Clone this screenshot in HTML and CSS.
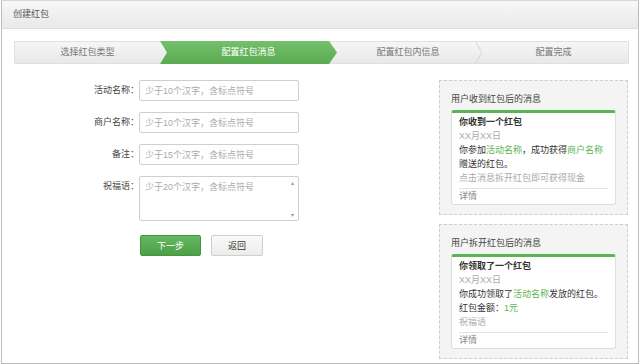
FILE: index.html
```html
<!DOCTYPE html>
<html lang="zh-CN">
<head>
  <meta charset="UTF-8">
  <title>创建红包</title>
  <link rel="stylesheet" href="styles.css">
</head>
<body>
  <div class="frame">
    <div class="header">创建红包</div>

    <div class="steps">
      <div class="step step-1">选择红包类型</div>
      <div class="step step-2 active">配置红包消息</div>
      <div class="step step-3">配置红包内信息
        <svg class="chevron" width="8" height="23" viewBox="0 0 8 23"><polyline points="0,0 7,11.5 0,23" fill="none" stroke="#d6d6d6" stroke-width="1"/></svg>
      </div>
      <div class="step step-4">配置完成</div>
    </div>

    <div class="main">
      <div class="form">
        <div class="row">
          <label class="label">活动名称：</label>
          <input class="field" type="text" placeholder="少于10个汉字，含标点符号">
        </div>
        <div class="row">
          <label class="label">商户名称：</label>
          <input class="field" type="text" placeholder="少于10个汉字，含标点符号">
        </div>
        <div class="row">
          <label class="label">备注：</label>
          <input class="field" type="text" placeholder="少于15个汉字，含标点符号">
        </div>
        <div class="row">
          <label class="label">祝福语：</label>
          <div class="area">
            <div class="area-text">少于20个汉字，含标点符号</div>
            <div class="area-bar">
              <span>&#9652;</span>
              <span>&#9662;</span>
            </div>
          </div>
        </div>
        <div class="actions">
          <button class="btn btn-green">下一步</button>
          <button class="btn btn-plain">返回</button>
        </div>
      </div>

      <div class="preview">
        <div class="panel">
          <div class="panel-title">用户收到红包后的消息</div>
          <div class="card">
            <div class="card-title">你收到一个红包</div>
            <div class="muted">XX月XX日</div>
            <div>你参加<span class="hl">活动名称</span>，成功获得<span class="hl">商户名称</span></div>
            <div>赠送的红包。</div>
            <div class="muted">点击消息拆开红包即可获得现金</div>
            <div class="card-foot">详情</div>
          </div>
        </div>
        <div class="panel">
          <div class="panel-title">用户拆开红包后的消息</div>
          <div class="card">
            <div class="card-title">你领取了一个红包</div>
            <div class="muted">XX月XX日</div>
            <div>你成功领取了<span class="hl">活动名称</span>发放的红包。</div>
            <div>红包金额：<span class="hl">1元</span></div>
            <div class="muted">祝福语</div>
            <div class="card-foot">详情</div>
          </div>
        </div>
      </div>
    </div>
  </div>
</body>
</html>
```

FILE: styles.css
```css
* {
  box-sizing: border-box;
}

body {
  margin: 0;
  font-family: "Liberation Sans", "Noto Sans CJK SC", sans-serif;
  font-size: 9px;
  color: #333;
  background: #fff;
}

.frame {
  width: 638px;
  height: 364px;
  margin-left: 1px;
  border: 1px solid #bdbdbd;
  border-top-color: #d8d8d8;
}

.header {
  height: 28px;
  line-height: 27px;
  padding-left: 11px;
  color: #555;
  background: linear-gradient(#f7f7f7, #e9e9e9);
  border-bottom: 1px solid #dcdcdc;
}

.steps {
  display: flex;
  height: 23px;
  margin: 12px 9px 0 12px;
  background: linear-gradient(#f6f6f6, #e8e8e8);
  border: 1px solid #e0e0e0;
}

.step {
  position: relative;
  line-height: 21px;
  text-align: center;
  color: #777;
}

.step-1 { width: 145px; }
.step-2 { width: 177px; margin-right: -8px; }
.step-3 { width: 150px; padding-left: 8px; }
.step-4 { flex: 1; }

.step.active {
  z-index: 1;
  margin-top: -1px;
  height: 23px;
  line-height: 23px;
  color: #fff;
  background: linear-gradient(#74c06c, #5aaa52);
  clip-path: polygon(0 0, calc(100% - 8px) 0, 100% 50%, calc(100% - 8px) 100%, 0 100%, 7px 50%);
}

.chevron {
  position: absolute;
  top: -1px;
  right: -4px;
}

.main {
  display: flex;
  padding: 16px 10px 0 12px;
}

.form {
  flex: 1;
}

.row {
  display: flex;
  align-items: flex-start;
  margin-bottom: 11px;
}

.label {
  width: 125px;
  line-height: 21px;
  text-align: right;
  color: #444;
}

.field {
  width: 160px;
  height: 21px;
  padding: 0 5px;
  border: 1px solid #cfcfcf;
  border-radius: 2px;
  font: inherit;
  outline: none;
}

.field::placeholder {
  color: #aaa;
}

.area {
  display: flex;
  width: 160px;
  height: 45px;
  border: 1px solid #cfcfcf;
  border-radius: 2px;
}

.area-text {
  flex: 1;
  padding: 3px 5px;
  color: #aaa;
}

.area-bar {
  display: flex;
  flex-direction: column;
  justify-content: space-between;
  width: 11px;
  padding: 2px 0;
  font-size: 6px;
  color: #999;
  text-align: center;
}

.actions {
  display: flex;
  gap: 10px;
  padding-left: 126px;
  margin-top: 14px;
}

.btn {
  height: 21px;
  border-radius: 2px;
  font: inherit;
  cursor: pointer;
}

.btn-green {
  width: 61px;
  color: #fff;
  background: linear-gradient(#66b860, #4d9f47);
  border: 1px solid #45963f;
}

.btn-plain {
  width: 52px;
  color: #333;
  background: linear-gradient(#fafafa, #ececec);
  border: 1px solid #cfcfcf;
}

.preview {
  width: 189px;
  display: flex;
  flex-direction: column;
  gap: 9px;
}

.panel {
  padding: 10px 11px 9px;
  background: #f4f4f4;
  border: 1px dashed #cdcdcd;
}

.panel-title {
  line-height: 16px;
  margin-bottom: 3px;
  color: #444;
}

.card {
  padding: 2px 7px 1px;
  line-height: 14px;
  background: #fff;
  border: 1px solid #dedede;
  border-top: 3px solid #5cb552;
  border-radius: 3px;
}

.card-title {
  font-weight: bold;
  color: #333;
}

.muted {
  color: #aaa;
}

.hl {
  color: #5cb552;
}

.card-foot {
  margin-top: 3px;
  color: #888;
  border-top: 1px solid #e2e2e2;
}
```
